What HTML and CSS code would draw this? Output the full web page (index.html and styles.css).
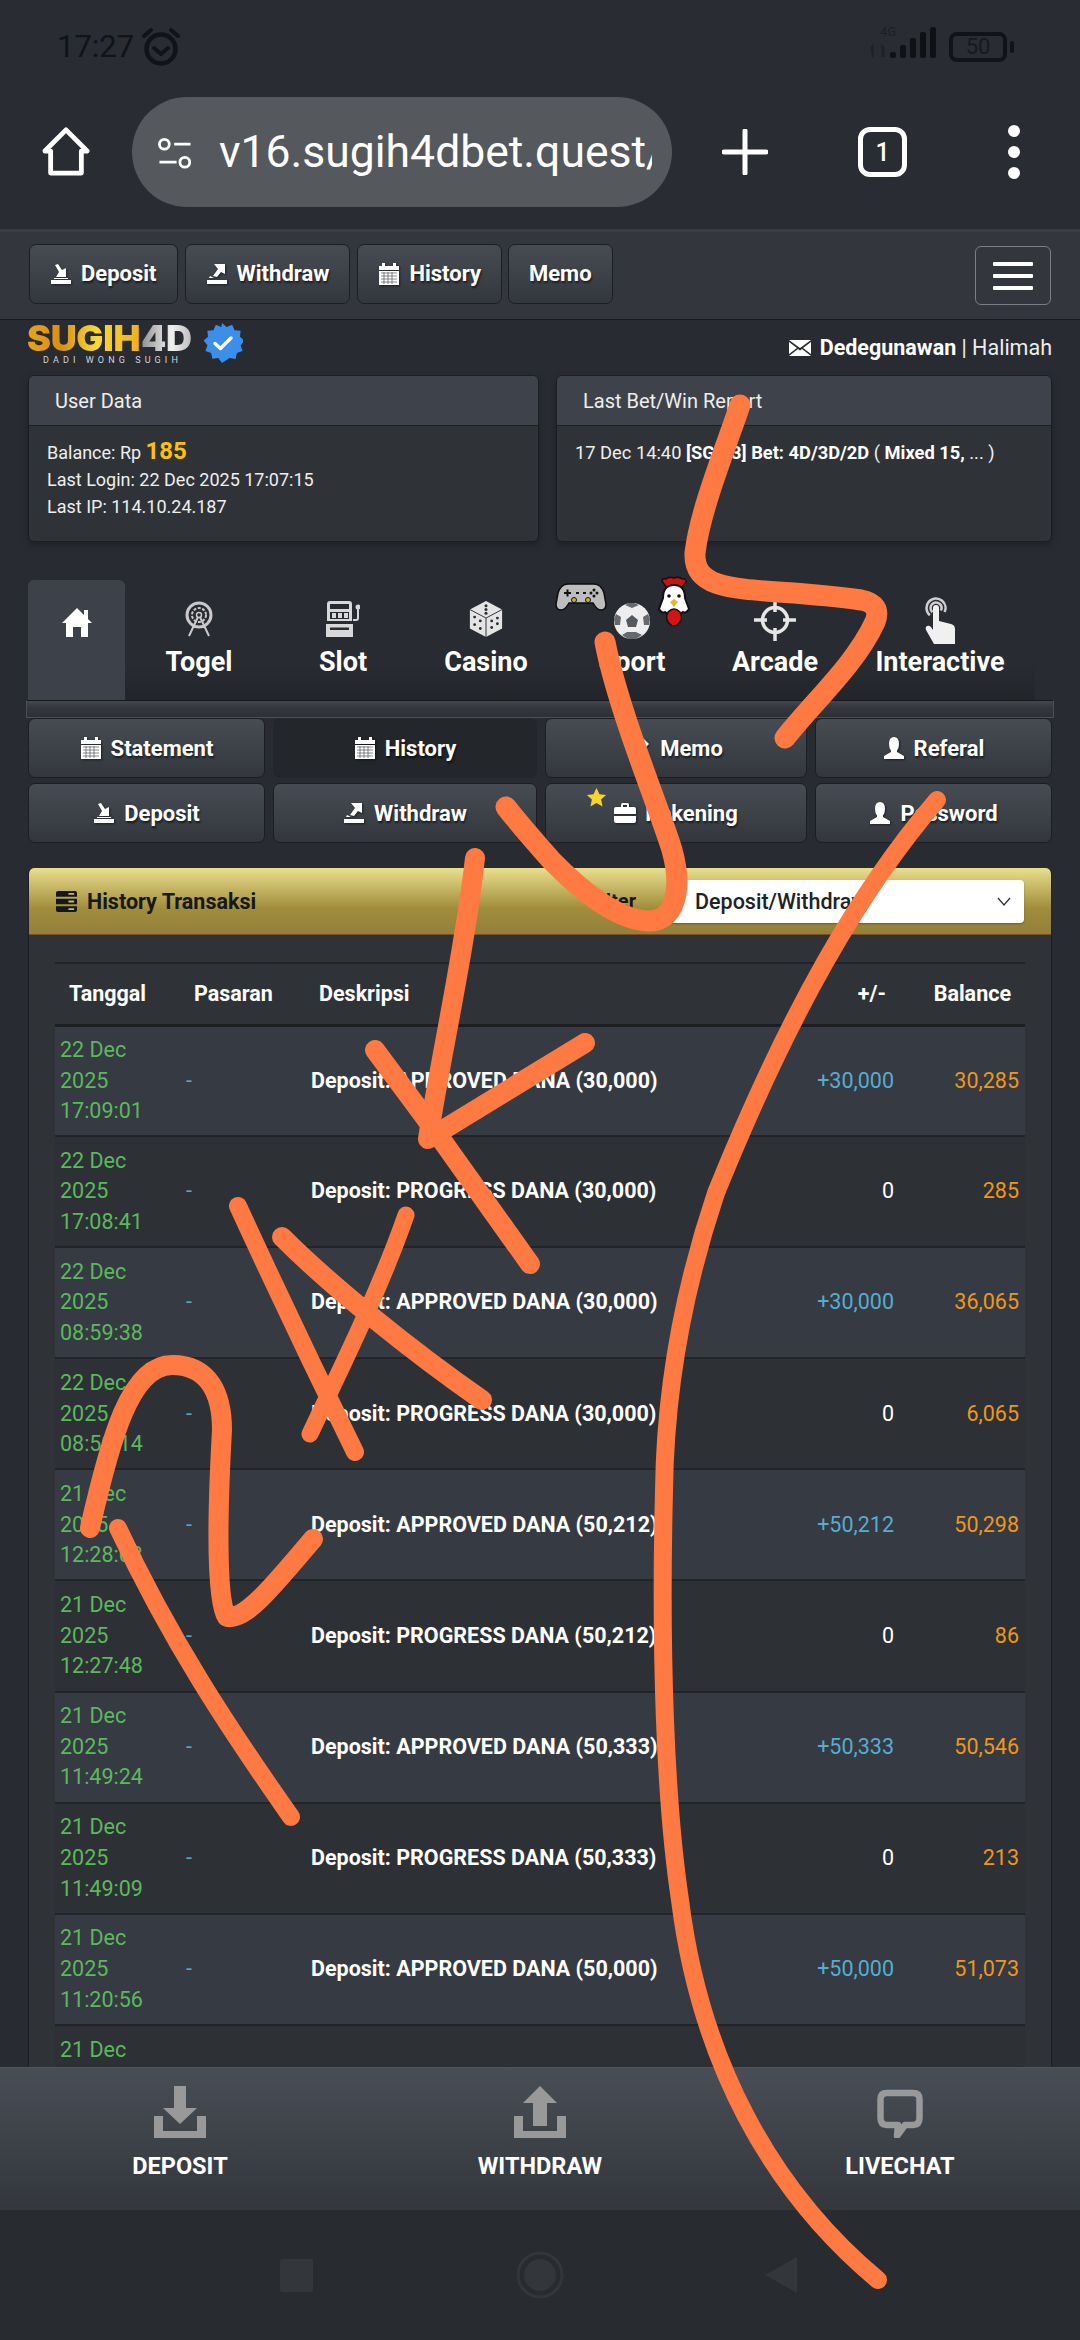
FILE: index.html
```html
<!DOCTYPE html>
<html lang="id">
<head>
<meta charset="utf-8">
<title>History Transaksi</title>
<link rel="stylesheet" href="styles.css">
</head>
<body>
<div class="screen">
  <div class="status">
    <div class="status-left">
      <span class="clock">17:27</span>
      <svg class="alarm" viewBox="0 0 40 40"><circle cx="20" cy="22" r="14.5" fill="none" stroke="#101317" stroke-width="4.5"/><path d="M13 21l7 6 7-6" fill="none" stroke="#101317" stroke-width="4" stroke-linecap="round" stroke-linejoin="round"/><path d="M3 9 10 3M37 9 30 3" stroke="#101317" stroke-width="4" stroke-linecap="round"/></svg>
    </div>
    <div class="status-right">
      <svg class="signal" viewBox="0 0 70 40">
        <text x="11" y="11" class="net">4G</text>
        <path d="M4 20v12M2 23l2-3v12zM13 20v12M13 20l2 3v9z" stroke="#191c20" stroke-width="1.5" fill="#191c20" opacity=".6"/>
        <rect x="21" y="27" width="6" height="6" rx="2" fill="#0f1215"/><rect x="31" y="20" width="6" height="13" rx="2" fill="#0f1215"/><rect x="41" y="13" width="6" height="20" rx="2" fill="#0f1215"/><rect x="51" y="7" width="6" height="26" rx="2" fill="#0f1215"/><rect x="61" y="2" width="6" height="31" rx="2" fill="#0f1215"/>
      </svg>
      <div class="battery"><span>50</span></div><i class="battery-tip"></i>
    </div>
  </div>

  <div class="browser">
    <svg class="b-home" viewBox="0 0 50 52"><path d="M25 3 47 25H41V48H9V25H3Z" fill="none" stroke="#fff" stroke-width="5" stroke-linejoin="round"/></svg>
    <div class="url">
      <svg class="tune" viewBox="0 0 44 44"><circle cx="9" cy="10" r="6" fill="none" stroke="#fff" stroke-width="3.4"/><path d="M21 10H41M3 32H24" stroke="#fff" stroke-width="3.4"/><circle cx="34" cy="32" r="6" fill="none" stroke="#fff" stroke-width="3.4"/></svg>
      <span class="url-text">v16.sugih4dbet.quest/</span>
    </div>
    <svg class="b-plus" viewBox="0 0 46 46"><path d="M23 2V44M2 23H44" stroke="#fff" stroke-width="5" stroke-linecap="round"/></svg>
    <div class="b-tabs">1</div>
    <div class="b-dots"><i></i><i></i><i></i></div>
  </div>

  <nav class="topnav">
    <div class="topnav-btns">
      <a class="btn top-btn"><svg class="ic" viewBox="0 0 22 22"><use href="#i-dep"/></svg>Deposit</a>
      <a class="btn top-btn"><svg class="ic" viewBox="0 0 22 22"><use href="#i-wd"/></svg>Withdraw</a>
      <a class="btn top-btn"><svg class="ic" viewBox="0 0 22 22"><use href="#i-cal"/></svg>History</a>
      <a class="btn top-btn top-memo">Memo</a>
    </div>
    <div class="burger"><i></i><i></i><i></i></div>
  </nav>

  <div class="brand">
    <div class="logo">
      <div class="logo-word"><span class="lw-gold">SUGIH</span><span class="lw-silver">4D</span></div>
      <div class="logo-tag">DADI WONG SUGIH</div>
    </div>
    <svg class="verified" viewBox="0 0 40 40"><path d="M20 0l4.6 4 5.6-2.300 2.400 5.600 6 .4-.6 6 4.400 4-3.800 4.700 2 5.700-5.700 2-1.300 5.900-6-.9L20 40l-3.600-5.100-6 .9-1.300-5.900-5.700-2 2-5.700L1.600 17.500 6 13.700l-.6-6 6-.4 2.400-5.600 5.600 2.300z" fill="#3b8ee9" transform="translate(-1 0)"/><path d="M12 20.500l5.500 5L28 15" fill="none" stroke="#fff" stroke-width="3.400" stroke-linecap="round" stroke-linejoin="round"/></svg>
    <div class="user">
      <svg class="mail" viewBox="0 0 22 16"><path d="M0 0H22L11 8zM0 2 8 8 0 14zM22 2 14 8 22 14zM9 9l2 1.500L13 9 22 16H0z" fill="#fff"/></svg>
      <span><b>Dedegunawan</b> | Halimah</span>
    </div>
  </div>

  <div class="info-row">
    <section class="info info-left">
      <h3 class="info-head">User Data</h3>
      <div class="info-body">
        <p class="bal">Balance: Rp <b>185</b></p>
        <p>Last Login: 22 Dec 2025 17:07:15</p>
        <p>Last IP: 114.10.24.187</p>
      </div>
    </section>
    <section class="info info-right">
      <h3 class="info-head">Last Bet/Win Report</h3>
      <div class="info-body report">
        <p>17 Dec 14:40 <b>[SGP 3] Bet: 4D/3D/2D</b> ( <b>Mixed 15,</b> ... )</p>
      </div>
    </section>
  </div>

  <div class="tabs">
    <div class="tab tab-home">
      <svg class="home-ic" viewBox="0 0 30 30"><path d="M15 1 22 8V3h4v9l4 4h-4v14h-7V20h-8v10H4V16H0Z" fill="#fff"/></svg>
    </div>
    <div class="tab w-togel">
      <svg class="tab-ic" viewBox="0 0 30 36"><g fill="none" stroke="#c9c9c9"><circle cx="15" cy="14" r="12" stroke-width="3"/><circle cx="15" cy="14" r="7" stroke-width="2" stroke-dasharray="3 1.500"/><circle cx="15" cy="14" r="2.500" stroke-width="1.500"/><path d="M14 16 5 35M16 16 25 35M9 26H21" stroke-width="2"/></g></svg>
      <span>Togel</span>
    </div>
    <div class="tab w-slot">
      <svg class="tab-ic" viewBox="0 0 34 36"><path d="M4 0H23Q26 0 26 3V20H1V3Q1 0 4 0ZM4 3V8H23V3ZM4 11V18H23V11Z" fill="#d8d8d8" fill-rule="evenodd"/><path d="M6 12h4v5H6zM12 12h4v5h-4zM18 12h4v5h-4z" fill="#d8d8d8"/><path d="M0 23H27V36H0Z" fill="#d8d8d8"/><path d="M4 26.500h19v2.500H4z" fill="#2a2d32"/><path d="M27 19h3q2 0 2-2V8" fill="none" stroke="#d8d8d8" stroke-width="2"/><circle cx="32" cy="6" r="2.500" fill="#d8d8d8"/></svg>
      <span>Slot</span>
    </div>
    <div class="tab w-casino">
      <svg class="tab-ic" viewBox="0 0 36 38"><path d="M18 0 35 9V29L18 38 1 29V9Z" fill="#e4e4e4"/><path d="M18 18V38M1 9 18 18 35 9" stroke="#2a2d32" stroke-width="1" fill="none"/><g fill="#2a2d32"><circle cx="18" cy="5" r="1.600"/><circle cx="18" cy="9" r="1.600"/><circle cx="18" cy="13" r="1.600"/><circle cx="6" cy="17" r="1.500"/><circle cx="12" cy="21" r="1.500"/><circle cx="6" cy="25" r="1.500"/><circle cx="12" cy="29" r="1.500"/><circle cx="24" cy="28" r="1.500"/><circle cx="30" cy="18" r="1.500"/><circle cx="30" cy="24" r="1.500"/><circle cx="24" cy="21" r="1.500"/></g></svg>
      <span>Casino</span>
    </div>
    <div class="tab w-sport">
      <svg class="tab-ic ball" viewBox="0 0 36 36"><circle cx="18" cy="18" r="18" fill="#eee"/><path d="M18 12 24 17 22 24H14L12 17Z" fill="#55585c"/><path d="M11 2 18 5 25 2 20 0H15ZM2 11 7 14 6 22 1 22 0 16ZM34 11 29 14 30 22 35 22 36 16ZM8 32 13 29 22 29 28 32 22 36H14Z" fill="#66696d"/></svg>
      <span>Sport</span>
      <svg class="pad" viewBox="0 0 52 28"><path d="M13 1H39Q46 1 49 10L51 21Q51 27 46 27 42 27 38 20H14Q10 27 6 27 1 27 1 21L3 10Q6 1 13 1Z" fill="#bdbdbd" stroke="#0d0d0d" stroke-width="1.500"/><path d="M9 10h7M12.500 6.500v7" stroke="#111" stroke-width="2"/><g fill="#111"><circle cx="39" cy="7" r="1.500"/><circle cx="39" cy="13" r="1.500"/><circle cx="36" cy="10" r="1.500"/><circle cx="42" cy="10" r="1.500"/><path d="M21 9h3v2h-3zM28 9h3v2h-3z"/></g><circle cx="19" cy="17" r="2.500" fill="#d4a93a" stroke="#111"/><circle cx="33" cy="17" r="2.500" fill="#d4a93a" stroke="#111"/></svg>
      <svg class="hen" viewBox="0 0 34 52"><path d="M5 5Q5 2 9 3 12 0 17 2 22 0 25 3 29 2 29 6L25 11H9Z" fill="#c91212" stroke="#111" stroke-width="1.500"/><path d="M17 9Q28 9 28 22L32 33Q29 38 26 36 22 40 17 40 12 40 8 36 5 38 2 33L6 22Q6 9 17 9Z" fill="#fff" stroke="#111" stroke-width="2"/><circle cx="12" cy="20" r="1.800" fill="#111"/><circle cx="22" cy="20" r="1.800" fill="#111"/><path d="M13 26 17 23 21 26 17 31Z" fill="#e9b72b"/><path d="M11 36Q17 30 23 36 27 44 20 49 17 51 14 49 7 44 11 36Z" fill="#d41414" stroke="#111" stroke-width="1.500"/></svg>
    </div>
    <div class="tab w-arcade">
      <svg class="tab-ic cross" viewBox="0 0 42 42"><circle cx="21" cy="21" r="12.500" fill="none" stroke="#e6e6e6" stroke-width="3.500"/><path d="M21 0V13M21 29V42M0 21H13M29 21H42" stroke="#e6e6e6" stroke-width="3.500"/></svg>
      <span>Arcade</span>
    </div>
    <div class="tab w-inter">
      <svg class="tab-ic touch" viewBox="0 0 30 47"><g fill="none" stroke="#cfcfcf" stroke-width="2.500"><circle cx="11" cy="11" r="9.500" stroke-dasharray="42 18" transform="rotate(130 11 11)"/><circle cx="11" cy="11" r="5.500" stroke-dasharray="24 11" transform="rotate(130 11 11)"/></g><path d="M8 11q0-3 3-3t3 3V24l12 3q4 1 4 5V47H9L1 33q-1-3 1-4 2-1 4 1l2 3Z" fill="#f0f0f0"/></svg>
      <span>Interactive</span>
    </div>
  </div>
  <div class="tabbar"></div>

  <div class="menu">
    <a class="btn"><svg class="ic" viewBox="0 0 22 22"><use href="#i-cal"/></svg>Statement</a>
    <a class="btn btn-on"><svg class="ic" viewBox="0 0 22 22"><use href="#i-cal"/></svg>History</a>
    <a class="btn"><svg class="ic" viewBox="0 0 22 22"><path d="M15 2l5 5L8 19l-6 1 1-6z" fill="#fff"/></svg>Memo</a>
    <a class="btn"><svg class="ic" viewBox="0 0 22 22"><use href="#i-user"/></svg>Referal</a>
    <a class="btn"><svg class="ic" viewBox="0 0 22 22"><use href="#i-dep"/></svg>Deposit</a>
    <a class="btn"><svg class="ic" viewBox="0 0 22 22"><use href="#i-wd"/></svg>Withdraw</a>
    <a class="btn"><svg class="star" viewBox="0 0 24 24"><path d="M12 1l3.400 7.300 7.600.9-5.700 5.200 1.600 7.800L12 18.300 5.100 22.200l1.600-7.800L1 9.200l7.600-.9z" fill="#f6d32d"/></svg><svg class="ic" viewBox="0 0 22 22"><path d="M7 5V2.500Q7 1 8.500 1h5Q15 1 15 2.500V5h5q2 0 2 2v5H0V7q0-2 2-2ZM9 3V5h4V3ZM0 14H22v5q0 2-2 2H2q-2 0-2-2Z" fill="#fff" fill-rule="evenodd"/></svg>Rekening</a>
    <a class="btn"><svg class="ic" viewBox="0 0 22 22"><use href="#i-user"/></svg>Password</a>
  </div>

  <section class="hist">
    <header class="hist-head">
      <svg class="hist-ic" viewBox="0 0 22 22"><path d="M2 0H20Q22 0 22 2V6H0V2Q0 0 2 0ZM0 8H22V14H0ZM0 16H22V20Q22 22 20 22H2Q0 22 0 20Z" fill="#15171a"/><path d="M13 2h6v2h-6zM13 10h6v2h-6zM13 18h6v2h-6z" fill="#c8b96a"/></svg>
      <span class="hist-title">History Transaksi</span>
      <span class="filter">Filter</span>
      <div class="select"><span>Deposit/Withdraw</span><svg class="chev" viewBox="0 0 14 9"><path d="M1 1l6 7 6-7" fill="none" stroke="#333" stroke-width="1.300"/></svg></div>
    </header>
    <div class="hist-body">
      <table class="tbl">
        <colgroup><col class="c1"><col class="c2"><col class="c3"><col class="c4"><col class="c5"></colgroup>
        <thead><tr><th>Tanggal</th><th>Pasaran</th><th>Deskripsi</th><th class="r">+/-</th><th class="r">Balance</th></tr></thead>
        <tbody>
          <tr><td class="d">22 Dec<br>2025<br>17:09:01</td><td class="m">-</td><td class="t">Deposit: APPROVED DANA (30,000)</td><td class="a plus">+30,000</td><td class="b">30,285</td></tr>
          <tr><td class="d">22 Dec<br>2025<br>17:08:41</td><td class="m">-</td><td class="t">Deposit: PROGRESS DANA (30,000)</td><td class="a">0</td><td class="b">285</td></tr>
          <tr><td class="d">22 Dec<br>2025<br>08:59:38</td><td class="m">-</td><td class="t">Deposit: APPROVED DANA (30,000)</td><td class="a plus">+30,000</td><td class="b">36,065</td></tr>
          <tr><td class="d">22 Dec<br>2025<br>08:59:14</td><td class="m">-</td><td class="t">Deposit: PROGRESS DANA (30,000)</td><td class="a">0</td><td class="b">6,065</td></tr>
          <tr><td class="d">21 Dec<br>2025<br>12:28:03</td><td class="m">-</td><td class="t">Deposit: APPROVED DANA (50,212)</td><td class="a plus">+50,212</td><td class="b">50,298</td></tr>
          <tr><td class="d">21 Dec<br>2025<br>12:27:48</td><td class="m">-</td><td class="t">Deposit: PROGRESS DANA (50,212)</td><td class="a">0</td><td class="b">86</td></tr>
          <tr><td class="d">21 Dec<br>2025<br>11:49:24</td><td class="m">-</td><td class="t">Deposit: APPROVED DANA (50,333)</td><td class="a plus">+50,333</td><td class="b">50,546</td></tr>
          <tr><td class="d">21 Dec<br>2025<br>11:49:09</td><td class="m">-</td><td class="t">Deposit: PROGRESS DANA (50,333)</td><td class="a">0</td><td class="b">213</td></tr>
          <tr><td class="d">21 Dec<br>2025<br>11:20:56</td><td class="m">-</td><td class="t">Deposit: APPROVED DANA (50,000)</td><td class="a plus">+50,000</td><td class="b">51,073</td></tr>
          <tr><td class="d">21 Dec<br>2025<br>11:20:31</td><td class="m">-</td><td class="t">Deposit: PROGRESS DANA (50,000)</td><td class="a">0</td><td class="b">1,073</td></tr>
        </tbody>
      </table>
    </div>
  </section>

  <footer class="dock">
    <a class="dock-item"><svg class="dock-ic" viewBox="0 0 52 52"><path d="M20 0H32V22H43L26 38 9 22H20Z" fill="#999"/><path d="M0 30H9V45H43V30H52V52H0Z" fill="#999"/></svg>DEPOSIT</a>
    <a class="dock-item"><svg class="dock-ic" viewBox="0 0 52 52"><path d="M26 0 43 17H33V40H19V17H9Z" fill="#999"/><path d="M0 30H9V45H43V30H52V52H0Z" fill="#999"/></svg>WITHDRAW</a>
    <a class="dock-item"><svg class="dock-ic" viewBox="0 0 52 52"><path d="M13 7H39Q45.500 7 45.500 13V32Q45.500 39 39 39H31L23 50 24 39H13Q6.500 39 6.500 32V13Q6.500 7 13 7Z" fill="none" stroke="#999" stroke-width="6.500" stroke-linejoin="round"/></svg>LIVECHAT</a>
  </footer>

  <div class="sysnav">
    <i class="nav-square"></i>
    <svg class="nav-home" viewBox="0 0 48 48"><circle cx="24" cy="24" r="22" fill="none" stroke="#33363a" stroke-width="3"/><circle cx="24" cy="24" r="16" fill="#33363a"/></svg>
    <svg class="nav-back" viewBox="0 0 32 36"><path d="M32 0V36L0 18Z" fill="#33363a"/></svg>
  </div>

  <svg class="scribble" viewBox="0 0 1080 2340">
    <g class="ink">
      <path class="w21" d="M740 405C725 450 700 510 695 553C693 600 760 585 861 600Q882 604 875 622C855 665 815 700 785 738"/>
      <path class="w21" d="M605 642C618 710 660 810 672 850C683 890 675 922 648 921C620 920 585 895 551 860Q520 825 506 807"/>
      <path class="w20" d="M475 858C465 950 440 1060 428 1139L585 1043"/>
      <path class="w20" d="M375 1050L441 1139L530 1264"/>
      <path class="w18" d="M238 1206Q295 1330 355 1452"/>
      <path class="w17" d="M406 1215C380 1290 340 1370 310 1434"/>
      <path class="w20" d="M282 1237C330 1285 410 1350 482 1400"/>
      <path class="w20" d="M90 1528C110 1440 130 1365 172 1365C210 1365 222 1395 222 1430C218 1500 215 1600 227 1617C245 1620 270 1590 313 1539"/>
      <path class="w18" d="M118 1528C170 1640 230 1730 291 1817"/>
      <path class="w18" d="M937 800C860 890 790 1010 716 1193C680 1300 665 1400 664 1491C660 1650 665 1800 680 1900C700 2060 770 2190 878 2280"/>
    </g>
  </svg>
</div>

<svg class="defs" width="0" height="0">
  <defs>
    <g id="i-dep"><path d="M1 17H21V21H1Z" fill="#fff"/><path d="M5 2 8 1 12 7 16 5V14H6L9 9ZM4 15H18V16H4Z" fill="#fff"/></g>
    <g id="i-wd"><path d="M1 17H21V21H1Z" fill="#fff"/><path d="M8 1H19V11L15 9 11 14 7 13 12 6Z" fill="#fff"/><path d="M4 13 8 15H3Z" fill="#fff"/></g>
    <g id="i-cal"><path d="M4 0H7V3H15V0H18V3H21V7H1V3H4ZM1 8H21V22H1Z" fill="#fff"/><path d="M3 10H19M3 13H19M3 16H19M3 19H19M6 9V21M10 9V21M14 9V21" stroke="#55585d" stroke-width=".7"/></g>
    <g id="i-user"><path d="M11 0Q16 0 16 7 16 11 14 13.500V15L21 19V22H1V19L8 15V13.500Q6 11 6 7 6 0 11 0Z" fill="#fff"/></g>
  </defs>
</svg>
</body>
</html>
```

FILE: styles.css
```css
* { box-sizing: border-box; }
html, body { margin: 0; padding: 0; }
body { width: 1080px; height: 2340px; overflow: hidden; background: #282b31; font-family: Roboto, "Noto Sans", sans-serif; color: #fff; }
.screen { position: relative; width: 1080px; height: 2340px; overflow: hidden; }
.defs { position: absolute; }

/* status bar */
.status { height: 90px; display: flex; justify-content: space-between; align-items: center; padding: 3px 66px 0 57px; background: #292c32; }
.status-left, .status-right { display: flex; align-items: center; }
.clock { font-size: 31px; color: #101317; }
.alarm { width: 40px; height: 40px; margin-left: 7px; }
.signal { width: 70px; height: 40px; margin-top: -4px; }
.net { font: 13px Roboto, sans-serif; fill: #1c1f23; }
.battery { width: 58px; height: 30px; margin-left: 10px; border: 4px solid #101317; border-radius: 8px; display: flex; align-items: center; justify-content: center; font-size: 22px; color: #17191d; }
.battery-tip { width: 4px; height: 12px; margin-left: 3px; border-radius: 2px; background: #101317; }

/* browser chrome */
.browser { height: 139px; display: flex; align-items: center; padding: 0 0 15px 42px; background: #292c32; }
.b-home { width: 48px; height: 50px; flex: none; }
.url { width: 540px; height: 110px; margin-left: 42px; flex: none; display: flex; align-items: center; padding: 0 20px 0 23px; background: #55585d; border-radius: 55px; overflow: hidden; }
.tune { width: 40px; height: 36px; flex: none; margin-top: 4px; }
.url-text { margin-left: 24px; font-size: 44.5px; white-space: nowrap; overflow: hidden; }
.b-plus { width: 46px; height: 46px; margin-left: 50px; flex: none; }
.b-tabs { width: 49px; height: 50px; margin-left: 90px; flex: none; border: 5px solid #fff; border-radius: 12px; display: flex; align-items: center; justify-content: center; font-size: 25px; font-weight: 500; }
.b-dots { margin-left: 101px; display: flex; flex-direction: column; gap: 9px; flex: none; }
.b-dots i { display: block; width: 12px; height: 12px; border-radius: 50%; background: #fff; }

/* buttons */
.btn { display: flex; align-items: center; justify-content: center; gap: 9px; height: 60px; position: relative; font-size: 22px; font-weight: 700; color: #fff; text-shadow: 1px 2px 2px rgba(0,0,0,.55); background: linear-gradient(#474c54, #33373d); border: 1px solid #1b1e22; border-radius: 7px; }
.ic { width: 22px; height: 22px; flex: none; filter: drop-shadow(1px 1px 1px rgba(0,0,0,.5)); }

/* top nav */
.topnav { height: 91px; display: flex; justify-content: space-between; align-items: center; padding: 0 29px; background: #33363c; border-top: 3px solid #3a3d43; border-bottom: 1px solid #191b1f; }
.topnav-btns { display: flex; gap: 7px; margin-top: -4px; }
.top-btn { padding: 0 20px; }
.top-btn.top-memo { padding: 0 20px; margin-left: -1px; }
.burger { width: 76px; height: 59px; display: flex; flex-direction: column; justify-content: center; gap: 8px; align-items: center; border: 1px solid #7b7f85; border-radius: 6px; }
.burger i { display: block; width: 40px; height: 4px; background: #fff; border-radius: 1px; }

/* brand */
.brand { height: 55px; display: flex; padding: 2px 28px 0 27px; position: relative; }
.logo { width: 170px; height: 44px; }
.logo-word { display: flex; font-family: Inter, "Open Sans", sans-serif; font-weight: 900; font-size: 36px; line-height: 32px; letter-spacing: -.3px; white-space: nowrap; }
.lw-gold { background: linear-gradient(90deg, #e9a21f, #d98f14 30%, #f9d93a 62%, #f2ae1c); -webkit-background-clip: text; background-clip: text; color: transparent; }
.lw-silver { margin-left: 1px; background: linear-gradient(90deg, #8f8f8f, #f0f0f0 60%, #bdbdbd); -webkit-background-clip: text; background-clip: text; color: transparent; }
.logo-tag { margin: 1px 0 0 16px; font-size: 9px; line-height: 10px; letter-spacing: 4.1px; color: #d6d6d6; white-space: nowrap; }
.verified { width: 40px; height: 40px; margin: 1px 0 0 6px; flex: none; }
.user { margin-left: auto; align-self: flex-start; margin-top: 13px; display: flex; align-items: center; gap: 4px; font-size: 21.5px; white-space: nowrap; color: #eee; }
.user b { color: #fff; }
.mail { width: 22px; height: 18px; margin-right: 5px; }

/* info panels */
.info-row { display: flex; gap: 17px; padding: 0 28px; height: 167px; }
.info { background: #2f3338; border: 1px solid #1b1e22; border-radius: 6px; overflow: hidden; box-shadow: 0 3px 6px rgba(0,0,0,.25); }
.info-left { width: 511px; }
.info-right { width: 496px; }
.info-head { margin: 0; height: 50px; padding: 0 0 0 26px; display: flex; align-items: center; font-size: 20px; font-weight: 400; color: #eee; background: #3e434b; border-bottom: 1px solid #1c1f23; }
.info-body { padding: 9px 18px; font-size: 18px; color: #eee; }
.info-body p { margin: 0; height: 26.5px; line-height: 26.5px; white-space: nowrap; }
.info-body .bal { height: 32px; line-height: 32px; }
.bal b { color: #fdc010; font-size: 24px; }
.report { padding-top: 14px; font-size: 18.3px; }
.report b { color: #fff; }

/* tabs */
.tabs { display: flex; height: 120px; margin: 38px 0 0 28px; }
.tab { position: relative; display: flex; flex-direction: column; align-items: center; justify-content: flex-end; padding-bottom: 20px; height: 120px; flex: none; font-size: 27px; font-weight: 700; background: linear-gradient(transparent 70%, rgba(20,22,25,.3)); }
.tab span { line-height: 36px; }
.tab-home { width: 97px; background: #3d424a; border-radius: 6px 6px 0 0; justify-content: flex-start; padding: 27px 0 0; }
.home-ic { width: 30px; height: 30px; }
.w-togel { width: 148px; }
.w-slot { width: 140px; }
.w-casino { width: 146px; }
.w-sport { width: 146px; }
.w-arcade { width: 140px; }
.w-inter { width: 190px; }
.tab-ic { width: 30px; height: 36px; margin-bottom: 7px; }
.w-slot .tab-ic { width: 34px; }
.w-casino .tab-ic { width: 36px; }
.ball { width: 36px; height: 36px; margin-bottom: 5px; filter: blur(.6px); }
.cross { width: 42px; height: 42px; margin-bottom: 3px; }
.touch { width: 30px; height: 47px; margin-bottom: 0; }
.pad { position: absolute; left: -4px; top: 3px; width: 52px; height: 28px; }
.hen { position: absolute; left: 98px; top: -4px; width: 34px; height: 52px; }
.tabbar { height: 18px; margin: 0 26px 0 26px; background: linear-gradient(#43474e, #33373c 45%, #2d3035); border: 1px solid #4c5056; border-top-color: #16181b; }

/* menu grid */
.menu { display: grid; grid-template-columns: 237px 264px 262px 237px; grid-auto-rows: 60px; column-gap: 8px; row-gap: 5px; margin: 0 28px 0; }
.btn-on { background: #23262a; border-color: #23262a; }
.star { position: absolute; left: 40px; top: 3px; width: 21px; height: 21px; }

/* history panel */
.hist { margin: 25px 28px 0; height: 1300px; background: #2f3338; border: 1px solid #1b1e22; border-width: 0 1px; border-radius: 6px 6px 0 0; overflow: hidden; }
.hist-head { height: 67px; display: flex; align-items: center; padding: 0 27px 0 27px; background: linear-gradient(#e8df8d, #a08c3b 62%, #93803a); border-bottom: 1px solid #7c4f24; color: #16181b; }
.hist-ic { width: 21px; height: 21px; flex: none; }
.hist-title { margin-left: 10px; font-size: 21.5px; font-weight: 700; }
.filter { margin-left: auto; font-size: 20px; font-weight: 700; }
.select { width: 356px; height: 43px; margin: 0 0 0 32px; padding: 0 13px 0 27px; display: flex; align-items: center; justify-content: space-between; background: #fff; border-radius: 4px; font-size: 21.5px; font-weight: 500; color: #202225; box-shadow: 0 1px 2px rgba(0,0,0,.3); }
.chev { width: 14px; height: 9px; }
.hist-body { padding: 27px 27px 0 26px; }
.tbl { width: 970px; table-layout: fixed; border-collapse: collapse; font-size: 21.5px; }
.c1 { width: 125px; }
.c2 { width: 125px; }
.c3 { width: 455px; }
.c4 { width: 140px; }
.c5 { width: 125px; }
.tbl th { height: 62px; padding: 0 14px; font-weight: 700; text-align: left; border-top: 2px solid #202327; border-bottom: 3px solid #1c1e22; }
.tbl th.r { text-align: right; }
.tbl td { height: 111.100px; padding: 0 6px; line-height: 30.600px; border-bottom: 2px solid #212429; }
.tbl tbody tr:nth-child(odd) { background: #363a42; }
.tbl tbody tr:nth-child(even) { background: #2d3136; }
.tbl .d { color: #5cb85c; padding-left: 5px; }
.m { color: #4fa8cc; }
.t { font-weight: 700; white-space: nowrap; }
.a { text-align: right; }
.plus { color: #55add0; }
.b { text-align: right; color: #ec971f; }

/* dock */
.dock { position: absolute; left: 0; right: 0; top: 2067px; height: 143px; display: grid; grid-template-columns: repeat(3, 1fr); background: linear-gradient(#484e56, #33373c); border-top: 1px solid #50555c; }
.dock-item { display: flex; flex-direction: column; align-items: center; padding-top: 18px; font-size: 23.5px; font-weight: 700; color: #fff; }
.dock-ic { width: 52px; height: 52px; margin-bottom: 14px; }

/* system nav */
.sysnav { position: absolute; left: 0; right: 0; top: 2210px; height: 130px; background: #282b30; }
.nav-square { position: absolute; left: 280px; top: 49px; width: 33px; height: 33px; border-radius: 2px; background: #33363a; }
.nav-home { position: absolute; left: 516px; top: 41px; width: 48px; height: 48px; }
.nav-back { position: absolute; left: 765px; top: 47px; width: 32px; height: 36px; }

/* hand-drawn marks over the page */
.scribble { position: absolute; left: 0; top: 0; width: 1080px; height: 2340px; pointer-events: none; }
.ink path { fill: none; stroke: #ff7a42; stroke-linecap: round; stroke-linejoin: round; }
.w21 { stroke-width: 21px; }
.w20 { stroke-width: 20px; }
.w18 { stroke-width: 18px; }
.w17 { stroke-width: 17px; }
```
